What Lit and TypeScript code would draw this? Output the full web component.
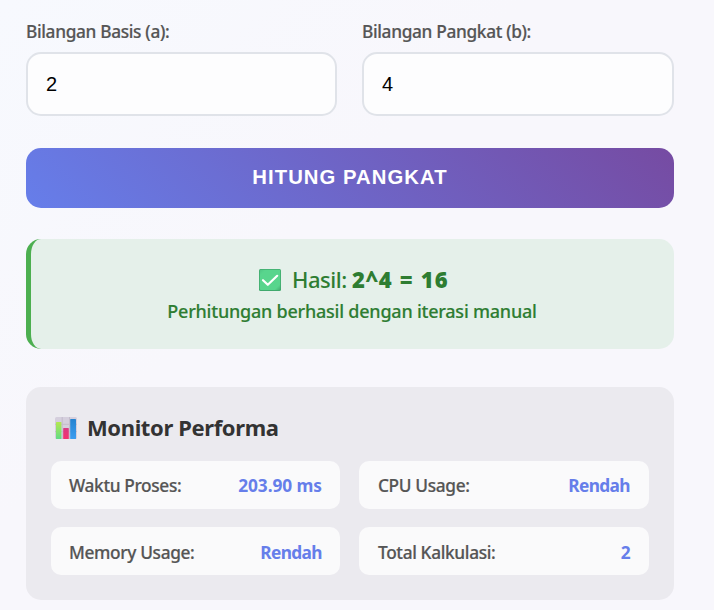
import { LitElement, html, css, svg } from "lit";
import { customElement, state } from "lit/decorators.js";

const checkIcon = svg`<svg class="check" width="22" height="22" viewBox="0 0 22 22">
  <defs><linearGradient id="c" x1="0" y1="0" x2="1" y2="1"><stop offset="0" stop-color="#50c584"/><stop offset=".15" stop-color="#58d58d"/><stop offset=".85" stop-color="#58d58d"/><stop offset="1" stop-color="#45ad72"/></linearGradient></defs>
  <rect width="22" height="22" rx="1.5" fill="#40a96d"/>
  <rect x=".8" y=".8" width="20.4" height="20.2" rx="1" fill="url(#c)"/>
  <path d="M4 11.2 8.8 15.8 18.2 6.8" fill="none" stroke="#fff" stroke-width="2.2" stroke-linecap="round" stroke-linejoin="round"/>
</svg>`;

const chartIcon = svg`<svg class="chart" width="22" height="22" viewBox="0 0 22 22">
  <defs>
    <linearGradient id="g" x1="0" y1="0" x2="0" y2="1"><stop offset="0" stop-color="#b4e850"/><stop offset="1" stop-color="#62db86"/></linearGradient>
    <linearGradient id="r" x1="0" y1="0" x2="0" y2="1"><stop offset="0" stop-color="#d83a83"/><stop offset="1" stop-color="#f5316f"/></linearGradient>
    <linearGradient id="b" x1="0" y1="0" x2="0" y2="1"><stop offset="0" stop-color="#2583d0"/><stop offset="1" stop-color="#3b9df0"/></linearGradient>
  </defs>
  <rect width="22" height="22" rx="1.5" fill="#d5cfdd"/>
  <path d="M7.2 0V22M14.5 0V22M0 7.3H22M0 14.6H22" stroke="#c3bccb" stroke-width="1"/>
  <rect x="1" y="5" width="5.4" height="17" rx=".6" fill="url(#g)"/>
  <rect x="8.2" y="11" width="5.6" height="11" rx=".6" fill="url(#r)"/>
  <rect x="15.2" y="2" width="5.8" height="20" rx=".6" fill="url(#b)"/>
</svg>`;

@customElement("app-root")
export class AppRoot extends LitElement {
  @state() private base = "2";
  @state() private exponent = "4";
  private metrics = [
    { label: "Waktu Proses:", value: "203.90 ms", cls: "time" },
    { label: "CPU Usage:", value: "Rendah", cls: "cpu" },
    { label: "Memory Usage:", value: "Rendah", cls: "memory" },
    { label: "Total Kalkulasi:", value: "2", cls: "total" },
  ];

  static styles = css`
    :host {
      display: flex;
      flex-direction: column;
      box-sizing: border-box;
      height: 610px;
      padding: 19px 40px 10px 26px;
      overflow: hidden;
      background: linear-gradient(135deg, #f7f9fe 0%, #f8f7fc 40%, #f8f7fc 100%);
      font-family: "Noto Sans", "Open Sans", sans-serif;
      color: #555;
    }
    * { box-sizing: border-box; }
    .fields { display: grid; grid-template-columns: 311px 312px; gap: 25px; }
    .field { display: flex; flex-direction: column; }
    label { height: 33px; line-height: 25px; font-size: 17.3px; font-weight: 500; letter-spacing: -0.34px; white-space: nowrap; -webkit-text-stroke: 0.2px; }
    input {
      width: 100%;
      height: 64px;
      padding: 0 18px;
      border: 2px solid #e0e3e9;
      border-radius: 15px;
      background: #fdfdfe;
      font: 20px "Liberation Sans", sans-serif;
      color: #000;
      outline: none;
    }
    button {
      height: 60px;
      margin: 32px 0 31px;
      padding: 0 0 2px 0;
      border: 0;
      border-radius: 15px;
      background: linear-gradient(45deg, #667eea, #764ba2);
      color: #fff;
      font: bold 20.3px "Liberation Sans", sans-serif;
      letter-spacing: 1.05px;
    }
    .result {
      display: flex;
      flex-direction: column;
      align-items: center;
      height: 110px;
      padding: 24px 1px 0 0;
      border-left: 5px solid #4caf50;
      border-radius: 15px;
      background: #e5f0ea;
      color: #2e7d32;
    }
    .answer { display: flex; align-items: center; height: 34px; margin-top: -1px; padding-left: 4px; font-size: 22px; font-weight: 500; letter-spacing: -0.5px; white-space: pre; }
    .check { margin: 1px 11px 0 0; }
    .answer strong { font-family: "Open Sans", sans-serif; font-weight: 800; letter-spacing: 1.2px; }
    .note { margin-top: 1px; line-height: 28px; font-size: 18px; font-weight: 500; letter-spacing: -0.23px; white-space: nowrap; -webkit-text-stroke: 0.15px; }
    .monitor { height: 213px; margin-top: 38px; padding: 23px 25px; border-radius: 15px; background: #ebeaef; }
    h3 { display: flex; align-items: center; height: 34px; margin: 0 0 17px; padding-left: 4px; font-size: 22px; font-weight: 700; letter-spacing: -0.38px; color: #333; }
    .chart { margin: 2px 10px 0 0; }
    .metrics { display: grid; grid-template-columns: 289px 290px; grid-auto-rows: 48px; gap: 18px 19px; }
    .metric { display: flex; justify-content: space-between; align-items: center; padding: 1px 19px 0 18px; border-radius: 10px; background: #fafafb; font-size: 17.3px; font-weight: 500; letter-spacing: -0.35px; white-space: nowrap; }
    .metric span:first-child { -webkit-text-stroke: 0.2px; }
    .memory, .total { padding-top: 2px; }
    .cpu, .total { padding-left: 19px; }
    .time, .memory { padding-right: 18px; }
    .metric .value { font-weight: 700; color: #667eea; letter-spacing: -0.6px; }
    .time .value { letter-spacing: -0.05px; }
  `;

  render() {
    return html`
      <div class="fields">
        <div class="field">
          <label for="base">Bilangan Basis (a):</label>
          <input id="base" .value=${this.base} @input=${(e: Event) => (this.base = (e.target as HTMLInputElement).value)} />
        </div>
        <div class="field">
          <label for="exponent">Bilangan Pangkat (b):</label>
          <input id="exponent" .value=${this.exponent} @input=${(e: Event) => (this.exponent = (e.target as HTMLInputElement).value)} />
        </div>
      </div>
      <button>HITUNG PANGKAT</button>
      <div class="result">
        <div class="answer">${checkIcon}<span>Hasil: </span><strong>2^4 = 16</strong></div>
        <div class="note">Perhitungan berhasil dengan iterasi manual</div>
      </div>
      <section class="monitor">
        <h3>${chartIcon}<span>Monitor Performa</span></h3>
        <div class="metrics">
          ${this.metrics.map((m) => html`<div class="metric ${m.cls}"><span>${m.label}</span><span class="value">${m.value}</span></div>`)}
        </div>
      </section>
    `;
  }
}
